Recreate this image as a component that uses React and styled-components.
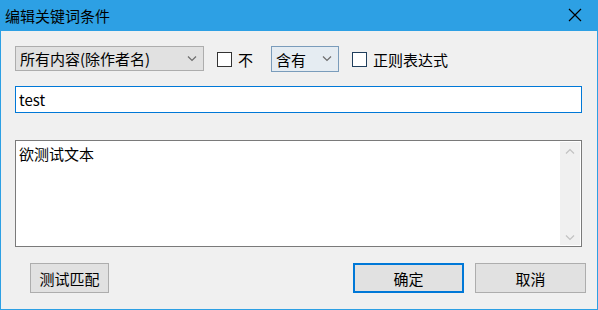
import React, { useState } from "react";
import styled, { createGlobalStyle } from "styled-components";

const GlobalStyle = createGlobalStyle`
  html, body {
    margin: 0;
    padding: 0;
    background: #f0f0f0;
  }
  * {
    box-sizing: border-box;
  }
`;

const FONT = `"Microsoft YaHei", "Noto Sans CJK SC", "Noto Sans", sans-serif`;
const ACCENT = "#2da0e4";

const Window = styled.div`
  width: 598px;
  height: 310px;
  border: 1px solid ${ACCENT};
  border-top: none;
  background: #f0f0f0;
  font-family: ${FONT};
  font-size: 15px;
  color: #000;
  display: flex;
  flex-direction: column;
`;

const TitleBar = styled.div`
  height: 31px;
  margin: 0 -1px;
  background: ${ACCENT};
  display: flex;
  align-items: center;
  justify-content: space-between;
  padding-left: 5px;
  padding-bottom: 1px;
`;

const Title = styled.span`
  font-size: 15px;
  line-height: 1;
`;

const CloseButton = styled.button`
  width: 46px;
  height: 30px;
  border: none;
  background: transparent;
  display: flex;
  align-items: center;
  justify-content: center;
  padding: 0;
  cursor: pointer;
`;

const Body = styled.div`
  flex: 1;
  display: flex;
  flex-direction: column;
  padding: 15px 15px 0 14px;
`;

const Row = styled.div`
  display: flex;
  align-items: center;
  height: 26px;
`;

const Select = styled.div`
  width: ${(p) => p.$width}px;
  height: ${(p) => p.$height}px;
  margin-right: ${(p) => p.$gap}px;
  border: 1px solid ${(p) => (p.$hot ? "#7a9cbb" : "#adadad")};
  background: ${(p) => (p.$hot ? "#e5ecf2" : "#e1e1e1")};
  display: flex;
  align-items: center;
  justify-content: space-between;
  padding: 0 6px 0 4px;
  line-height: 1;
  align-self: flex-start;
`;

const Check = styled.label`
  display: flex;
  align-items: center;
  gap: 6px;
  margin-right: ${(p) => p.$gap}px;
  cursor: default;
`;

const Box = styled.span`
  width: 15px;
  height: 15px;
  border: 1px solid ${(p) => (p.$hot ? "#1f3e5c" : "#333")};
  background: #fff;
`;

const TextInput = styled.input`
  margin-top: 14px;
  width: 567px;
  height: 27px;
  border: 1px solid #0078d7;
  background: #fff;
  font-family: ${FONT};
  font-size: 15px;
  padding: 0 3px;
  outline: none;
`;

const Memo = styled.div`
  margin-top: 27px;
  width: 567px;
  height: 107px;
  border: 1px solid #7a7a7a;
  background: #fff;
  display: flex;
  padding: 1px;
`;

const MemoText = styled.div`
  flex: 1;
  padding: 2px 2px;
  line-height: 20px;
`;

const ScrollBar = styled.div`
  width: 20px;
  background: #f0f0f0;
  display: flex;
  flex-direction: column;
  justify-content: space-between;
  align-items: center;
  padding: 6px 0 4px;
`;

const ButtonRow = styled.div`
  margin-top: 16px;
  display: flex;
  align-items: center;
  padding-left: 15px;
  margin-right: -4px;
`;

const Button = styled.button`
  width: ${(p) => p.$width}px;
  height: 30px;
  border: ${(p) => (p.$primary ? "2px solid #0078d7" : "1px solid #adadad")};
  background: #e1e1e1;
  font-family: ${FONT};
  font-size: 15px;
  color: #000;
  padding: 0;
  cursor: pointer;
`;

const Spacer = styled.div`
  flex: 1;
`;

const ButtonGroup = styled.div`
  display: flex;
  gap: 11px;
`;

const Chevron = ({ up, color = "#6d6d6d" }) => (
  <svg width="10" height="6" viewBox="0 0 10 6">
    <path
      d={up ? "M1 5.5 L5 1.5 L9 5.5" : "M1 0.5 L5 4.5 L9 0.5"}
      fill="none"
      stroke={color}
      strokeWidth="1.2"
    />
  </svg>
);

const App = () => {
  const [keyword, setKeyword] = useState("test");

  return (
    <>
      <GlobalStyle />
      <Window>
        <TitleBar>
          <Title>编辑关键词条件</Title>
          <CloseButton>
            <svg width="14" height="14" viewBox="0 0 14 14">
              <path d="M1 1 L13 13 M13 1 L1 13" stroke="#000" strokeWidth="1.2" />
            </svg>
          </CloseButton>
        </TitleBar>
        <Body>
          <Row>
            <Select $width={189} $height={25} $gap={13}>
              <span>所有内容(除作者名)</span>
              <Chevron />
            </Select>
            <Check $gap={18}>
              <Box />
              <span>不</span>
            </Check>
            <Select $width={68} $height={26} $gap={13} $hot>
              <span>含有</span>
              <Chevron />
            </Select>
            <Check>
              <Box $hot />
              <span>正则表达式</span>
            </Check>
          </Row>
          <TextInput value={keyword} onChange={(e) => setKeyword(e.target.value)} />
          <Memo>
            <MemoText>欲测试文本</MemoText>
            <ScrollBar>
              <Chevron up color="#c2c2c2" />
              <Chevron color="#c2c2c2" />
            </ScrollBar>
          </Memo>
          <ButtonRow>
            <Button $width={79}>测试匹配</Button>
            <Spacer />
            <ButtonGroup>
              <Button $width={111} $primary>确定</Button>
              <Button $width={111}>取消</Button>
            </ButtonGroup>
          </ButtonRow>
        </Body>
      </Window>
    </>
  );
};

export default App;
